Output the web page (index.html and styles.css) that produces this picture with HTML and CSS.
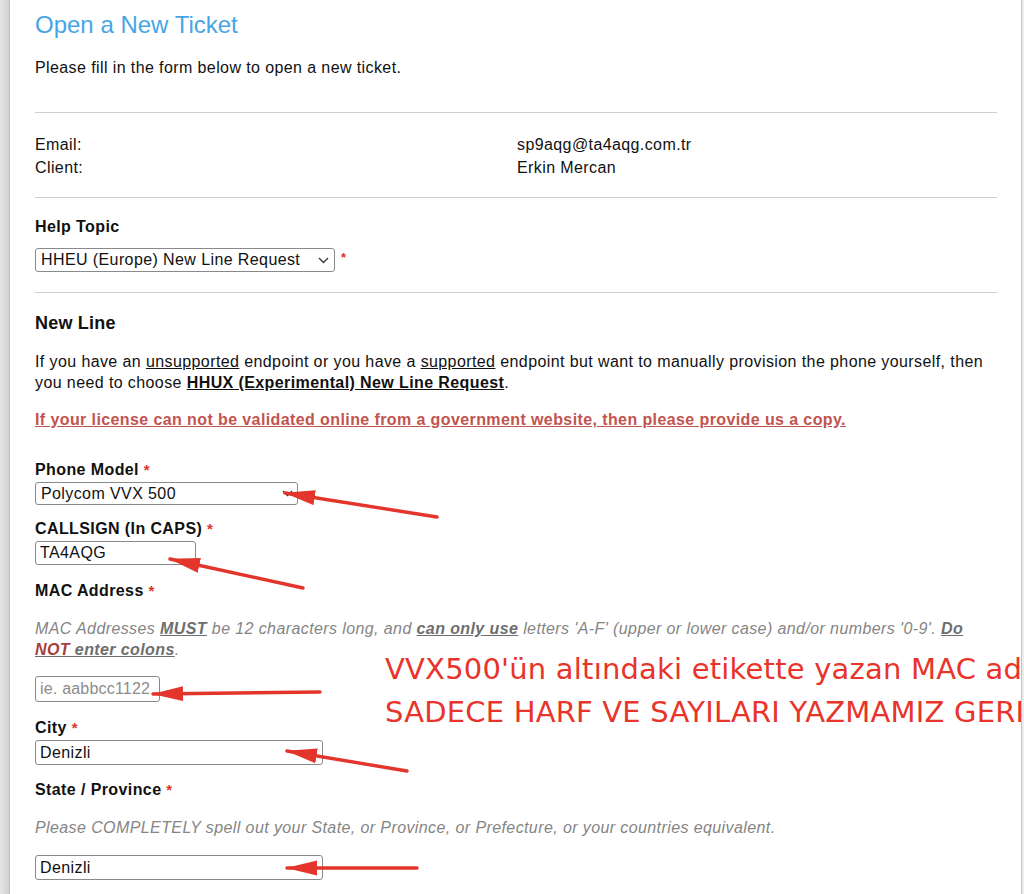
FILE: index.html
```html
<!DOCTYPE html>
<html lang="en">
<head>
<meta charset="utf-8">
<title>Open a New Ticket</title>
<link rel="stylesheet" href="styles.css">
</head>
<body>
<div class="frame">
  <div class="gutter-left"></div>
  <main class="main">
    <h1 class="title">Open a New Ticket</h1>
    <p class="intro">Please fill in the form below to open a new ticket.</p>
    <hr class="rule rule-first">
    <div class="info">
      <span>Email:</span><span>sp9aqg@ta4aqg.com.tr</span>
      <span>Client:</span><span>Erkin Mercan</span>
    </div>
    <hr class="rule rule-second">
    <div class="label label-topic">Help Topic</div>
    <div class="topic-row">
      <div class="select select-topic"><span>HHEU (Europe) New Line Request</span><svg class="chev" width="11" height="7" viewBox="0 0 11 7"><path d="M1 1l4.5 4.5L10 1" fill="none" stroke="#333" stroke-width="1.3"/></svg></div>
      <span class="req req-topic">*</span>
    </div>
    <hr class="rule rule-third">
    <h2 class="section">New Line</h2>
    <p class="para">If you have an <u>unsupported</u> endpoint or you have a <u>supported</u> endpoint but want to manually provision the phone yourself, then you need to choose <b><u>HHUX (Experimental) New Line Request</u></b>.</p>
    <p class="warn"><u>If your license can not be validated online from a government website, then please provide us a copy.</u></p>

    <div class="label label-phone">Phone Model <span class="req">*</span></div>
    <div class="select select-phone"><span>Polycom VVX 500</span><svg class="chev" width="11" height="7" viewBox="0 0 11 7"><path d="M1 1l4.5 4.5L10 1" fill="none" stroke="#333" stroke-width="1.3"/></svg></div>

    <div class="label label-call">CALLSIGN (In CAPS) <span class="req">*</span></div>
    <div class="field field-call">TA4AQG</div>

    <div class="label label-mac">MAC Address <span class="req">*</span></div>
    <p class="help help-mac">MAC Addresses <b><u>MUST</u></b> be 12 characters long, and <b><u>can only use</u></b> letters 'A-F' (upper or lower case) and/or numbers '0-9'. <b><u>Do <span class="not">NOT</span> enter colons</u></b>.</p>
    <div class="field field-mac placeholder">ie. aabbcc1122</div>

    <div class="label label-city">City <span class="req">*</span></div>
    <div class="field field-city">Denizli</div>

    <div class="label label-state">State / Province <span class="req">*</span></div>
    <p class="help help-state">Please COMPLETELY spell out your State, or Province, or Prefecture, or your countries equivalent.</p>
    <div class="field field-state">Denizli</div>
  </main>
  <div class="gutter-right"></div>
</div>

<div class="note">
  <div class="note-line note-line-1">VVX500'ün altındaki etikette yazan MAC adresini iki nokta olmadan</div>
  <div class="note-line note-line-2">SADECE HARF VE SAYILARI YAZMAMIZ GEREKİYOR</div>
</div>

<svg class="arrows" width="1024" height="894" viewBox="0 0 1024 894">
  <defs>
    <marker id="head" markerUnits="userSpaceOnUse" markerWidth="32" markerHeight="16" refX="30" refY="8" orient="auto">
      <path d="M0 0.5L31 8L0 15.5z" fill="#e3352b"/>
    </marker>
  </defs>
  <g stroke="#e3352b" stroke-width="3.4" stroke-linecap="round" fill="none">
    <line x1="437" y1="517" x2="285" y2="493" marker-end="url(#head)"/>
    <line x1="303" y1="588" x2="170" y2="559" marker-end="url(#head)"/>
    <line x1="320" y1="692" x2="153" y2="694" marker-end="url(#head)"/>
    <line x1="407" y1="771" x2="287" y2="751" marker-end="url(#head)"/>
    <line x1="417" y1="868" x2="287" y2="868" marker-end="url(#head)"/>
  </g>
</svg>
</body>
</html>
```

FILE: styles.css
```css
html, body {
  margin: 0;
  padding: 0;
  background: #fff;
}
body {
  font-family: "Liberation Sans", Arial, sans-serif;
  font-size: 16px;
  letter-spacing: 0.4px;
  color: #111;
  width: 1024px;
  height: 894px;
  overflow: hidden;
  position: relative;
}
.frame {
  display: flex;
  height: 894px;
}
.gutter-left {
  width: 9px;
  flex: none;
  background: linear-gradient(to right, #e6e6e6, #d2d2d2);
  border-right: 1px solid #bdbdbd;
}
.gutter-right {
  width: 2px;
  flex: none;
  background: #ececec;
  border-left: 1px solid #c4c4c4;
}
.main {
  flex: 1;
  padding: 11px 24px 0 25px;
  min-width: 0;
}
.title {
  margin: 0 0 18px;
  font-size: 24px;
  line-height: 28px;
  font-weight: normal;
  letter-spacing: 0;
  color: #47a5e6;
}
.intro {
  margin: 0;
  line-height: 21px;
}
.rule {
  border: 0;
  border-top: 1px solid #cfcfcf;
  margin: 0;
}
.rule-first { margin-top: 34px; }
.info {
  display: grid;
  grid-template-columns: 482px auto;
  line-height: 23px;
  margin-top: 20px;
}
.rule-second { margin-top: 18px; }
.label {
  font-weight: bold;
  line-height: 21px;
}
.label-topic { margin-top: 18px; }
.topic-row {
  display: flex;
  align-items: center;
  margin-top: 11px;
}
.select {
  box-sizing: border-box;
  display: flex;
  align-items: center;
  justify-content: space-between;
  border: 1px solid #8a8a8a;
  border-radius: 3px;
  padding: 0 5px 0 5px;
  background: #fff;
  color: #111;
}
.chev { flex: none; }
.select-topic {
  width: 300px;
  height: 24px;
}
.req {
  color: #e0322a;
  font-weight: bold;
  font-size: 15px;
}
.req-topic {
  margin-left: 6px;
  font-size: 13px;
  align-self: flex-start;
  margin-top: 2px;
}
.rule-third { margin-top: 20px; }
.section {
  margin: 19px 0 0;
  font-size: 18px;
  line-height: 22px;
  font-weight: bold;
  letter-spacing: 0.2px;
}
.para {
  margin: 17px 0 0;
  line-height: 21px;
}
.warn {
  margin: 16px 0 0;
  line-height: 21px;
  font-weight: bold;
  color: #c2544f;
}
.label-phone { margin-top: 29px; }
.select-phone {
  width: 263px;
  height: 23px;
  margin-top: 2px;
  padding-right: 4px;
}
.label-call { margin-top: 13px; }
.field {
  box-sizing: border-box;
  border: 1px solid #8a8a8a;
  border-radius: 3px;
  padding: 0 4px;
  display: flex;
  align-items: center;
  background: #fff;
}
.field-call {
  width: 161px;
  height: 24px;
  margin-top: 2px;
}
.label-mac { margin-top: 15px; }
.help {
  margin: 17px 0 0;
  line-height: 21px;
  font-style: italic;
  color: #858585;
}
.help b { color: #6e6e6e; }
.help .not { color: #a5403b; }
.field-mac {
  width: 125px;
  height: 26px;
  margin-top: 16px;
  letter-spacing: 0.2px;
}
.placeholder { color: #8c8c8c; }
.label-city { margin-top: 15px; }
.field-city {
  width: 288px;
  height: 25px;
  margin-top: 2px;
}
.label-state { margin-top: 14px; }
.field-state {
  width: 288px;
  height: 25px;
  margin-top: 17px;
}
.note {
  position: absolute;
  left: 385px;
  top: 648px;
  width: 636px;
  overflow: hidden;
  color: #e8342a;
  font-family: "DejaVu Sans", Verdana, sans-serif;
  font-size: 29px;
  line-height: 43px;
  letter-spacing: 0.2px;
  white-space: nowrap;
  pointer-events: none;
}
.arrows {
  position: absolute;
  left: 0;
  top: 0;
  pointer-events: none;
}
```
